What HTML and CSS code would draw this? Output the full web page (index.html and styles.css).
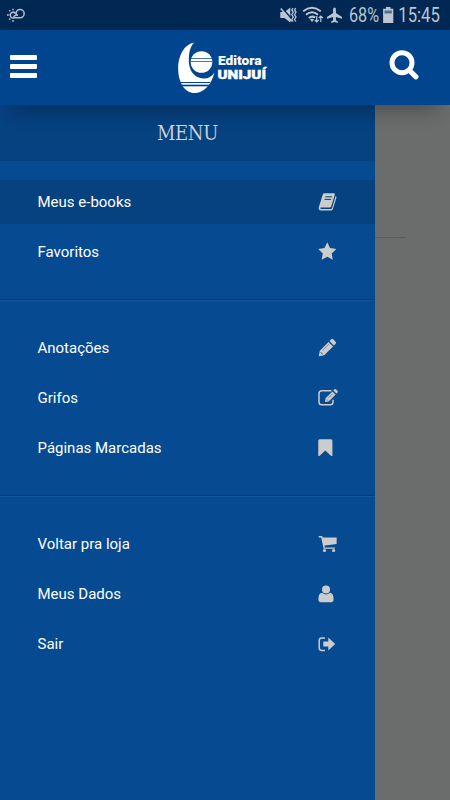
FILE: index.html
```html
<!DOCTYPE html>
<html lang="pt-BR">
<head>
<meta charset="utf-8">
<meta name="viewport" content="width=device-width, initial-scale=1">
<title>Editora Unijuí</title>
<link rel="stylesheet" href="styles.css">
</head>
<body>
<div class="status">
  <svg class="weather" width="19" height="15" viewBox="0 0 19 15" fill="none" stroke="#b3c0d0" stroke-width="1.5">
    <path d="M7 9.7A2.8 2.8 0 1 1 8.4 5.5M7 9.7H13A4.1 4.1 0 1 0 9 5.1Q9 7.2 11 7.4M7 9.7Q6.4 7.6 9.3 7.2"/>
    <path d="M6 .7v1.6M2.3 2.3l1 1M0 7h1.8M2.2 11.6l1.1-1.1M6 12v1.7"/>
  </svg>
  <svg class="system" width="170" height="30" viewBox="0 0 170 30" fill="#bcc6d3">
    <path d="M.3 12h4.2l5.8-4.5v15L4.5 18H.3z"/>
    <path d="M2.500 8l9.500 11.500" stroke="#002852" stroke-width="1.400"/>
    <path d="M.8 8.5L11.7 21.5" stroke="#bcc6d3" stroke-width="1.5"/>
    <path d="M13 8l-1.2 2 1.5 2-1.5 2.5 1.5 2.5-1.5 2.5 1.3 2M15.7 8l-1.2 2 1.5 2-1.5 2.5 1.5 2.5-1.5 2.5 1.3 2" fill="none" stroke="#bcc6d3" stroke-width="1.3"/>
    <g fill="none" stroke="#bcc6d3" stroke-width="2"><path d="M23.2 11.2Q32 4.3 40.8 11.2M26 14.8Q32 9.8 38 14.8M28.8 18Q32 15.5 35.2 17.5"/></g>
    <path d="M30 19.5q2-1.3 4 0l-2 2.5z"/>
    <path d="M36.7 16v6M34.7 20l2 2 2-2M40.8 22v-6M38.8 18l2-2 2 2" fill="none" stroke="#bcc6d3" stroke-width="1.2"/>
    <path d="M54.5 7.5q1.4 0 1.4 2v3.400l6.100 4v1.800l-6.100-1.800v3.400l1.900 1.300v1.300l-3.300-.9-3.300.9v-1.300l1.900-1.300v-3.400L47 18.700v-1.800l6.100-4V9.500q0-2 1.400-2z"/>
    <text x="69" y="22" font-size="19.5" textLength="30" lengthAdjust="spacingAndGlyphs">68%</text>
    <path d="M106 7h4.500v1.700h2.800v14.300h-10.200V8.700h2.900z"/>
    <path d="M104.500 10.500h7.400v3h-7.400z" fill="#526f91"/>
    <text x="118.3" y="22" font-size="19.5" textLength="41.5" lengthAdjust="spacingAndGlyphs">15:45</text>
  </svg>
</div>
<header class="bar">
  <div class="burger"><i></i><i></i><i></i></div>
  <svg class="logo" width="90" height="54" viewBox="0 0 90 54" fill="#fff">
    <path d="M16.500 1.500C6 3 .2 15 .2 27.500.2 42 7 52 16.500 52 25 52 33 45 36.500 31.500 33.500 36 29.500 38 25 37.500 15 36.500 10.500 28 10.800 18.500 11 10 13 4 16.500 1.500z"/>
    <circle cx="23.500" cy="21" r="10.800"/>
    <path d="M13 17.500h21M13 20.500h21" stroke="#4778ae" stroke-width="1"/>
    <path d="M2 41.500h30" stroke="#00458e" stroke-width="1"/><path d="M3 44.500h28" stroke="#00458e" stroke-width="1.700"/>
    <text x="40" y="23.500" font-size="12.500" font-weight="900" textLength="43.500" lengthAdjust="spacingAndGlyphs">Editora</text>
    <text x="39.500" y="37.500" font-size="12.500" font-weight="900" stroke="#fff" stroke-width=".4" textLength="48.500" lengthAdjust="spacingAndGlyphs">UNIJUÍ</text>
  </svg>
  <svg class="search" width="32" height="32" viewBox="0 0 32 32" fill="none" stroke="#fff">
    <circle cx="14" cy="13.700" r="10" stroke-width="5"/><path d="M21.500 21.500l6.500 6.300" stroke-width="5.200" stroke-linecap="round"/>
  </svg>
</header>
<main class="content">
  <nav class="drawer">
    <h1 class="title">MENU</h1>
    <ul class="group">
      <li class="item active">Meus e-books<svg class="icon" viewBox="0 0 22 20"><path d="M6.200 1.300h9.700q1.300 0 .9 1.400l-3.500 11.500q-.4 1.300-1.700 1.300H3q-1 0-.8.800.3.700 1.200.7h9.200q1.200 0 1.500-1L17.600 4q1.100.5.800 1.700l-3.500 11.200q-.5 1.500-2 1.500H3.100Q.2 18.400.7 15.400L4.600 3q.4-1.700 1.600-1.700z"/><path d="M7.300 4.800h6.700M6.500 7.400h6.700" stroke="#06407f" stroke-width="1"/></svg></li>
      <li class="item">Favoritos<svg class="icon" viewBox="0 0 22 20"><path d="M9.300.3l2.700 5.800 6.300.9-4.600 4.400 1.100 6.300-5.500-3-5.600 3 1.100-6.300L.3 7l6.200-.9z"/></svg></li>
    </ul>
    <ul class="group">
      <li class="item">Anotações<svg class="icon" viewBox="0 0 22 20"><path d="M.7 18.300l1.100-5.600L10.500 4l4.600 4.600-8.800 8.700zM11.500 3l1.700-1.700q1-.9 2 0l2.400 2.400q1 1 0 2l-1.700 1.800z"/><path d="M2.600 14.200l2.200 2.200" stroke="#064a91" stroke-width=".9"/><path d="M4.800 12.200l6.500-6.500" stroke="#064a91" stroke-width=".4"/></svg></li>
      <li class="item">Grifos<svg class="icon" viewBox="0 0 22 20"><path d="M13.500 2.700H3.700Q1 2.700 1 5.500V14q0 2.800 2.700 2.800h8.600q2.700 0 2.700-2.800v-2.200" fill="none" stroke="#ccc" stroke-width="1.500"/><path d="M7 14l.5-3.700 6.900-6.900 3.200 3.200-6.900 6.900zM15.300 2.500l1.200-1.200q.7-.6 1.400 0l1.700 1.700q.7.700 0 1.400l-1.200 1.200z"/><path d="M8.600 11.300l1.500 1.500M10.500 9.900l4.300-4.300" stroke="#064a91" stroke-width=".5"/></svg></li>
      <li class="item">Páginas Marcadas<svg class="icon" viewBox="0 0 22 20"><path d="M1.700 1.300h11.200q1.500 0 1.500 1.500v15.300h-1.200l-5.900-5.600-5.900 5.600H.3V2.800q0-1.500 1.400-1.500z"/></svg></li>
    </ul>
    <ul class="group">
      <li class="item">Voltar pra loja<svg class="icon" viewBox="0 0 22 20"><path d="M.7 2.700h3l2.500 11.400h10.600" fill="none" stroke="#ccc" stroke-width="1.400"/><path d="M4 3.500h14.600v6.600L5.400 11.800z"/><circle cx="6.500" cy="16.500" r="1.600"/><circle cx="15.600" cy="16.500" r="1.600"/></svg></li>
      <li class="item">Meus Dados<svg class="icon" viewBox="0 0 22 20"><circle cx="8" cy="5.600" r="4"/><path d="M4.100 8.700q3.900 3.400 7.800 0 3.700.6 3.700 6.300 0 3.200-2.600 3.200H3Q.4 18.200.4 15q0-5.700 3.700-6.300z"/></svg></li>
      <li class="item">Sair<svg class="icon" viewBox="0 0 22 20"><path d="M7 4H3.700Q1.200 4 1.200 6.700v7q0 2.700 2.500 2.700H7" fill="none" stroke="#ccc" stroke-width="1.500"/><path d="M5.300 7.400h5V3.500L17.200 10l-6.900 6.500v-4h-5z"/></svg></li>
    </ul>
  </nav>
  <div class="page"></div>
</main>
</body>
</html>
```
FILE: styles.css
```css
* { box-sizing: border-box; }
body {
  margin: 0;
  height: 800px;
  overflow: hidden;
  display: flex;
  flex-direction: column;
  font-family: Roboto, "Liberation Sans", sans-serif;
}
svg { display: block; }
.status {
  flex: none;
  height: 30px;
  background: #002852;
  display: flex;
  justify-content: space-between;
  padding-left: 7px;
}
.weather { margin-top: 8px; }
.bar {
  flex: none;
  height: 75px;
  background: #00458e;
  display: flex;
  justify-content: space-between;
  align-items: center;
  padding: 0 30px 0 10px;
  box-shadow: 0 17px 20px -12px rgba(0, 0, 0, .3);
  z-index: 1;
}
.burger {
  display: flex;
  flex-direction: column;
  gap: 4px;
  width: 27px;
  margin-top: -2px;
}
.burger i {
  height: 5px;
  background: #fff;
  border-radius: 1px;
}
.logo { margin: 0 72px 0 92px; }
.search { margin-top: -6px; }
.content {
  flex: 1;
  display: flex;
}
.drawer {
  width: 375px;
  background: #064a91;
  color: #fff;
}
.title {
  margin: 0 0 19px;
  height: 56px;
  background: #064180;
  color: #d5dbe2;
  text-align: center;
  font: 400 20px/57px "DejaVu Serif Condensed", "DejaVu Serif", serif;
  font-stretch: condensed;
  letter-spacing: -.4px;
  -webkit-text-stroke: .15px #064180;
}
.group {
  list-style: none;
  margin: 0;
  padding: 0 0 25px;
  display: flex;
  flex-direction: column;
  gap: 6px;
}
.group + .group {
  border-top: 1px solid #043668;
  box-shadow: inset 0 1px #1256a0;
  padding-top: 26px;
}
.item {
  height: 44px;
  padding: 0 35px 0 37.5px;
  display: flex;
  align-items: center;
  justify-content: space-between;
  font-size: 15px;
}
.active { background: #064180; }
.icon {
  width: 22px;
  height: 20px;
  fill: #ccc;
}
.page {
  flex: 1;
  background: #6b6d6c;
}
.page::before {
  content: "";
  display: block;
  width: 31px;
  height: 1px;
  margin-top: 132px;
  background: #5c5e5d;
}
```
